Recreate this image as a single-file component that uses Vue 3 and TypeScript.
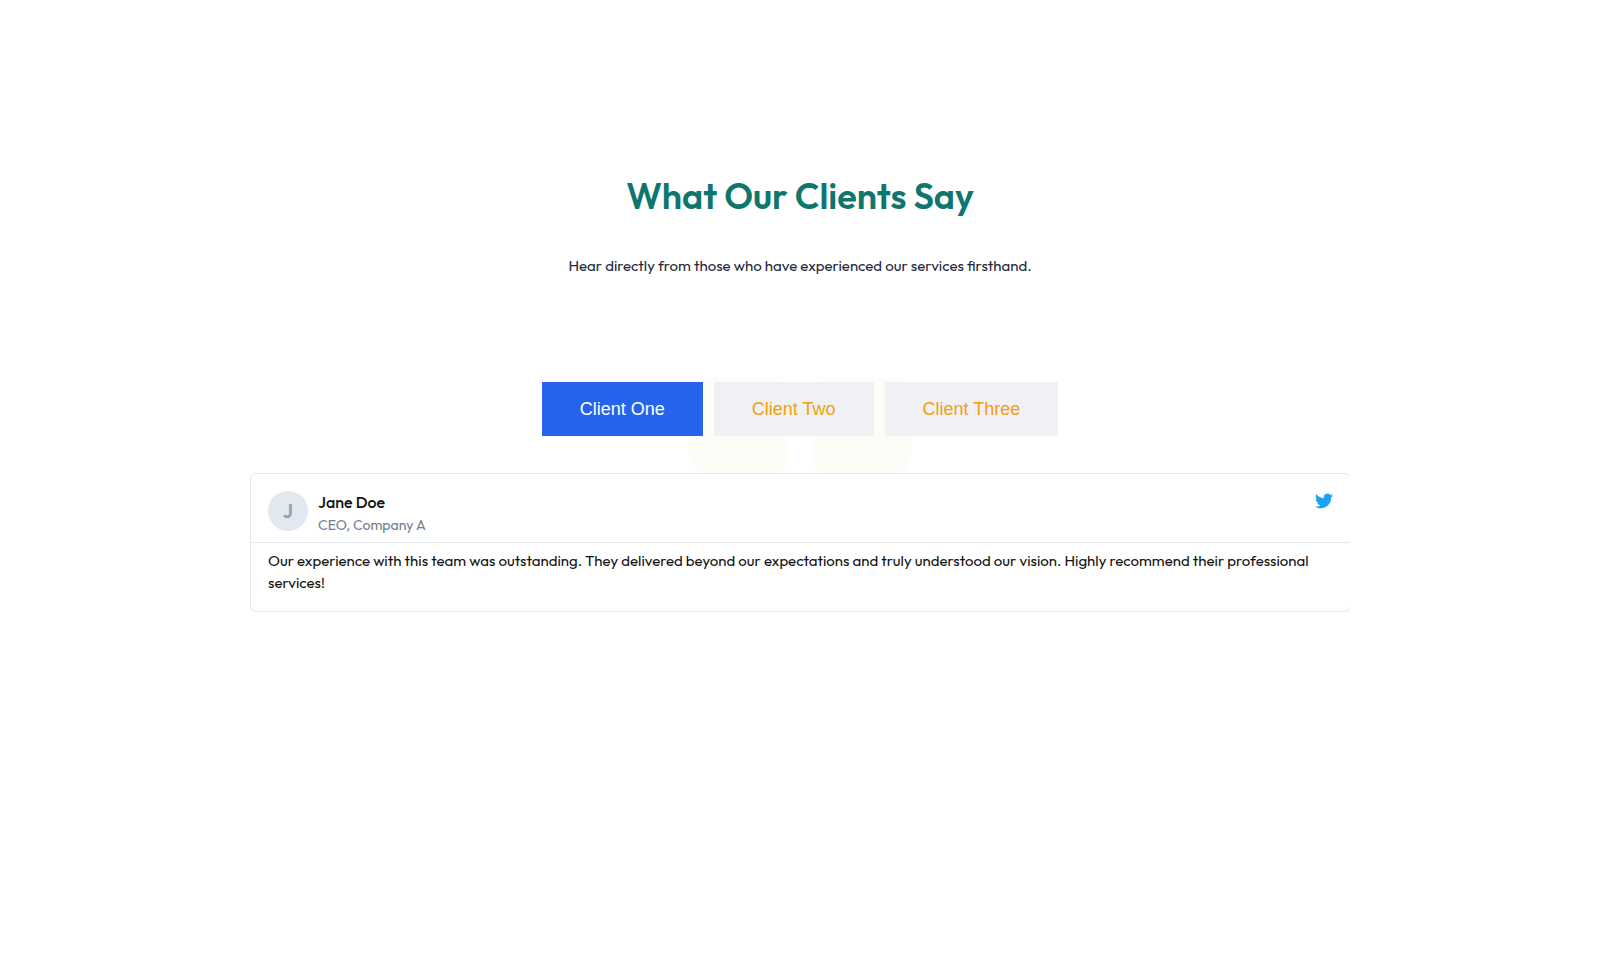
<script setup lang="ts">
import { computed, ref } from 'vue'

interface Testimonial {
  tab: string
  name: string
  role: string
  quote: string
}

const testimonials: Testimonial[] = [
  {
    tab: 'Client One',
    name: 'Jane Doe',
    role: 'CEO, Company A',
    quote:
      'Our experience with this team was outstanding. They delivered beyond our expectations and truly understood our vision. Highly recommend their professional services!',
  },
  { tab: 'Client Two', name: '', role: '', quote: '' },
  { tab: 'Client Three', name: '', role: '', quote: '' },
]

const active = ref(0)
const current = computed(() => testimonials[active.value])
</script>

<template>
  <section class="testimonials">
    <h2 class="title">What Our Clients Say</h2>
    <p class="subtitle">Hear directly from those who have experienced our services firsthand.</p>

    <div class="showcase">
      <div class="backdrop" aria-hidden="true">
        <span class="mark"></span>
        <span class="mark"></span>
      </div>

      <div class="tabs" role="tablist">
        <button
          v-for="(item, i) in testimonials"
          :key="item.tab"
          type="button"
          role="tab"
          class="tab"
          :class="{ active: i === active }"
          :aria-selected="i === active"
          @click="active = i"
        >
          {{ item.tab }}
        </button>
      </div>

      <article class="card" role="tabpanel">
        <header class="card-head">
          <span class="avatar">{{ current.name.charAt(0) }}</span>
          <div class="person">
            <h3 class="name">{{ current.name }}</h3>
            <p class="role">{{ current.role }}</p>
          </div>
          <a class="social" href="#" aria-label="Twitter">
            <svg viewBox="0 0 24 24" width="18" height="20" fill="currentColor">
              <path d="M23.953 4.57a10 10 0 01-2.825.775 4.958 4.958 0 002.163-2.723c-.951.555-2.005.959-3.127 1.184a4.92 4.92 0 00-8.384 4.482C7.69 8.095 4.067 6.13 1.64 3.162a4.822 4.822 0 00-.666 2.475c0 1.71.87 3.213 2.188 4.096a4.904 4.904 0 01-2.228-.616v.06a4.923 4.923 0 003.946 4.827 4.996 4.996 0 01-2.212.085 4.936 4.936 0 004.604 3.417 9.867 9.867 0 01-6.102 2.105c-.39 0-.779-.023-1.17-.067a13.995 13.995 0 007.557 2.209c9.053 0 13.998-7.496 13.998-13.985 0-.21 0-.42-.015-.63A9.935 9.935 0 0024 4.59z" />
            </svg>
          </a>
        </header>
        <p class="quote">{{ current.quote }}</p>
      </article>
    </div>
  </section>
</template>

<style>
body {
  margin: 0;
  background: #ffffff;
}
</style>

<style scoped>
.testimonials {
  box-sizing: border-box;
  max-width: 1100px;
  margin: 0 auto;
  padding: 172px 0 96px;
  font-family: Outfit, Lato, 'Liberation Sans', sans-serif;
  font-size: 15px;
  line-height: 22px;
  color: #111111;
}

.title {
  margin: 0;
  font-size: 36px;
  line-height: 48px;
  font-weight: 600;
  text-align: center;
  color: #0f766e;
}

.subtitle {
  margin: 36px 0 0;
  line-height: 20px;
  text-align: center;
  color: #1e293b;
}

.showcase {
  position: relative;
  padding-top: 106px;
  overflow: hidden;
}

.backdrop {
  position: absolute;
  inset: 102px 0 auto;
  display: flex;
  justify-content: center;
  gap: 22px;
}

.mark {
  width: 100px;
  height: 95px;
  border-radius: 18px;
  background: #fefcf7;
}

.tabs {
  position: relative;
  display: flex;
  flex-wrap: wrap;
  justify-content: center;
  gap: 11px;
}

.tab {
  padding: 16px 38px;
  border: 0;
  background: #f0f1f4;
  font-family: 'Liberation Sans', Arial, sans-serif;
  font-size: 18px;
  line-height: 22px;
  color: #f59e0b;
  cursor: pointer;
}

.tab.active {
  background: #2563eb;
  color: #ffffff;
}

.card {
  position: relative;
  margin: 37px -1px 0 0;
  border: 1px solid #e2e8f0;
  border-radius: 6px;
  background: #ffffff;
}

.card-head {
  display: flex;
  align-items: flex-start;
  gap: 10px;
  padding: 17px 17px 5px;
  border-bottom: 1px solid #e2e8f0;
}

.avatar {
  display: grid;
  place-items: center;
  width: 40px;
  height: 40px;
  border-radius: 50%;
  background: #e2e8f0;
  font-size: 20px;
  font-weight: 600;
  color: #94a3b8;
}

.person {
  flex: 1;
}

.name {
  margin: 0;
  font-size: 16px;
  line-height: 22px;
  font-weight: 500;
}

.role {
  margin: 0;
  font-size: 14px;
  line-height: 24px;
  color: #708090;
}

.social {
  display: flex;
  color: #1da1f2;
}

.quote {
  margin: 0;
  padding: 7px 17px 17px;
}
</style>
